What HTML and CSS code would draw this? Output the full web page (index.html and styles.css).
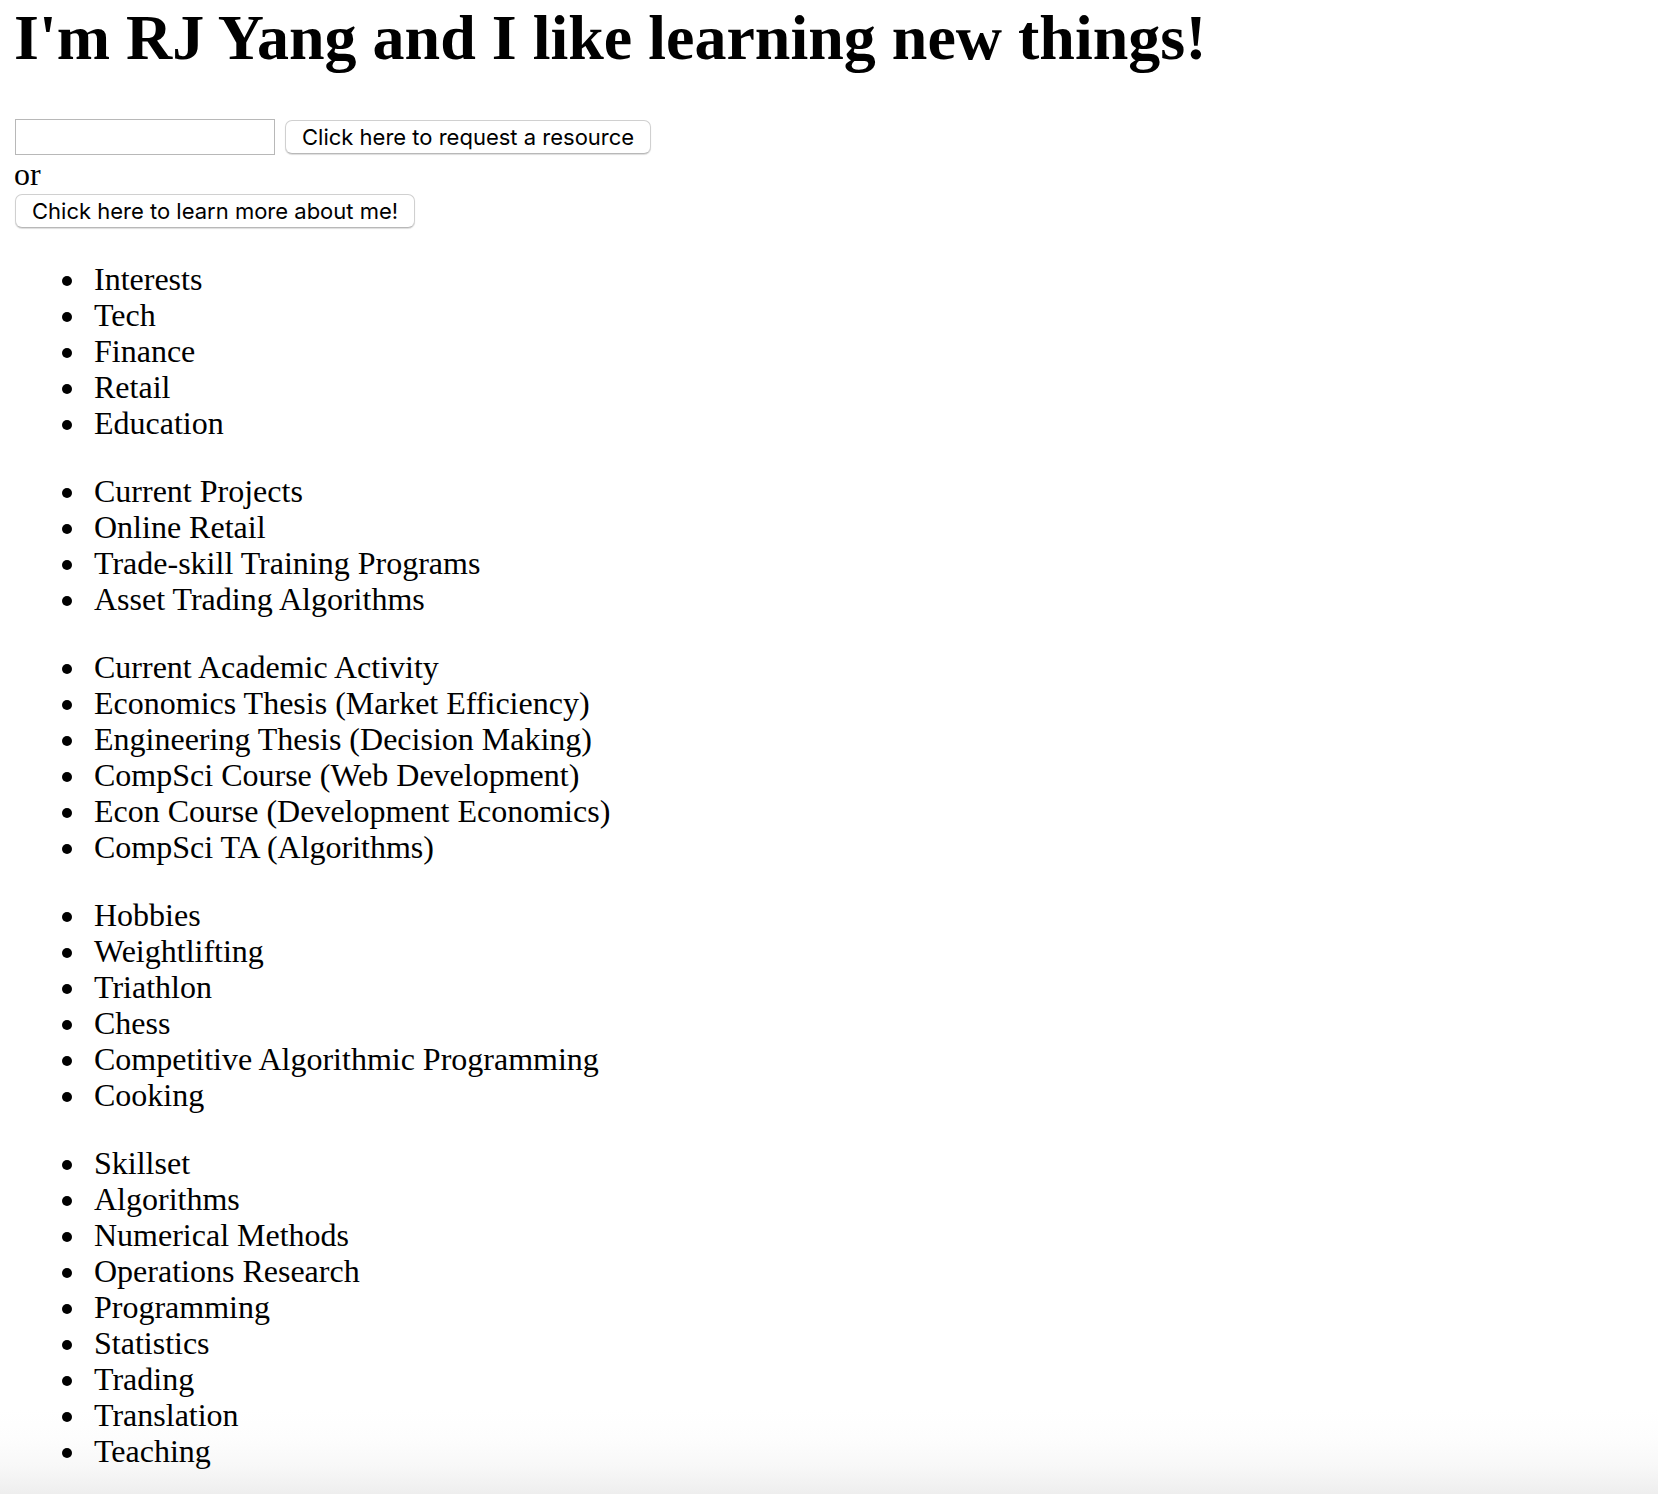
FILE: index.html
```html
<!DOCTYPE html>
<html lang="en">
<head>
<meta charset="utf-8">
<title>RJ Yang</title>
<link rel="stylesheet" href="styles.css">
</head>
<body>
<main class="page">
<h1 class="title">I'm RJ Yang and I like learning new things!</h1>
<form class="request">
<input class="field" type="text" aria-label="Resource">
<button class="button" type="button">Click here to request a resource</button>
</form>
<div class="or">or</div>
<div class="more"><button class="button" type="button">Chick here to learn more about me!</button></div>
<ul class="list">
<li>Interests</li>
<li>Tech</li>
<li>Finance</li>
<li>Retail</li>
<li>Education</li>
</ul>
<ul class="list">
<li>Current Projects</li>
<li>Online Retail</li>
<li>Trade-skill Training Programs</li>
<li>Asset Trading Algorithms</li>
</ul>
<ul class="list">
<li>Current Academic Activity</li>
<li>Economics Thesis (Market Efficiency)</li>
<li>Engineering Thesis (Decision Making)</li>
<li>CompSci Course (Web Development)</li>
<li>Econ Course (Development Economics)</li>
<li>CompSci TA (Algorithms)</li>
</ul>
<ul class="list">
<li>Hobbies</li>
<li>Weightlifting</li>
<li>Triathlon</li>
<li>Chess</li>
<li>Competitive Algorithmic Programming</li>
<li>Cooking</li>
</ul>
<ul class="list">
<li>Skillset</li>
<li>Algorithms</li>
<li>Numerical Methods</li>
<li>Operations Research</li>
<li>Programming</li>
<li>Statistics</li>
<li>Trading</li>
<li>Translation</li>
<li>Teaching</li>
</ul>
</main>
</body>
</html>
```

FILE: styles.css
```css
* {
  box-sizing: border-box;
}

body {
  margin: 0;
  background: #fff;
  color: #000;
  font-family: "Liberation Serif", "Times New Roman", serif;
  font-size: 32px;
  line-height: 36px;
}

.page {
  min-height: 100vh;
  padding: 2px 14px 22px;
  background: linear-gradient(to top, #eee, #f8f8f8 28px, #fdfdfd 56px, #fff 84px);
}

.title {
  margin: 0 0 45px;
  font-size: 64px;
  line-height: 72px;
}

.request {
  display: flex;
  align-items: center;
  gap: 10px;
  padding: 0 0 1px 1px;
}

.field {
  width: 260px;
  height: 36px;
  margin: 0;
  padding: 4px;
  border: 1px solid #b8b8b8;
  background: #fff;
  font: 22px Inter, sans-serif;
}

.button {
  height: 34px;
  margin: 0;
  padding: 0 16px;
  border: 1px solid #d0d0d0;
  border-bottom-color: #b8b8b8;
  border-radius: 7px;
  background: #fff;
  color: #000;
  font: 22px/32px Inter, sans-serif;
  white-space: nowrap;
  box-shadow: 0 1px 1px #ddd;
}

.more {
  display: flex;
  padding: 2px 0 1px 1px;
}

.list {
  margin: 32px 0 0;
  padding-left: 74px;
}

.list li {
  padding-left: 6px;
}
```
